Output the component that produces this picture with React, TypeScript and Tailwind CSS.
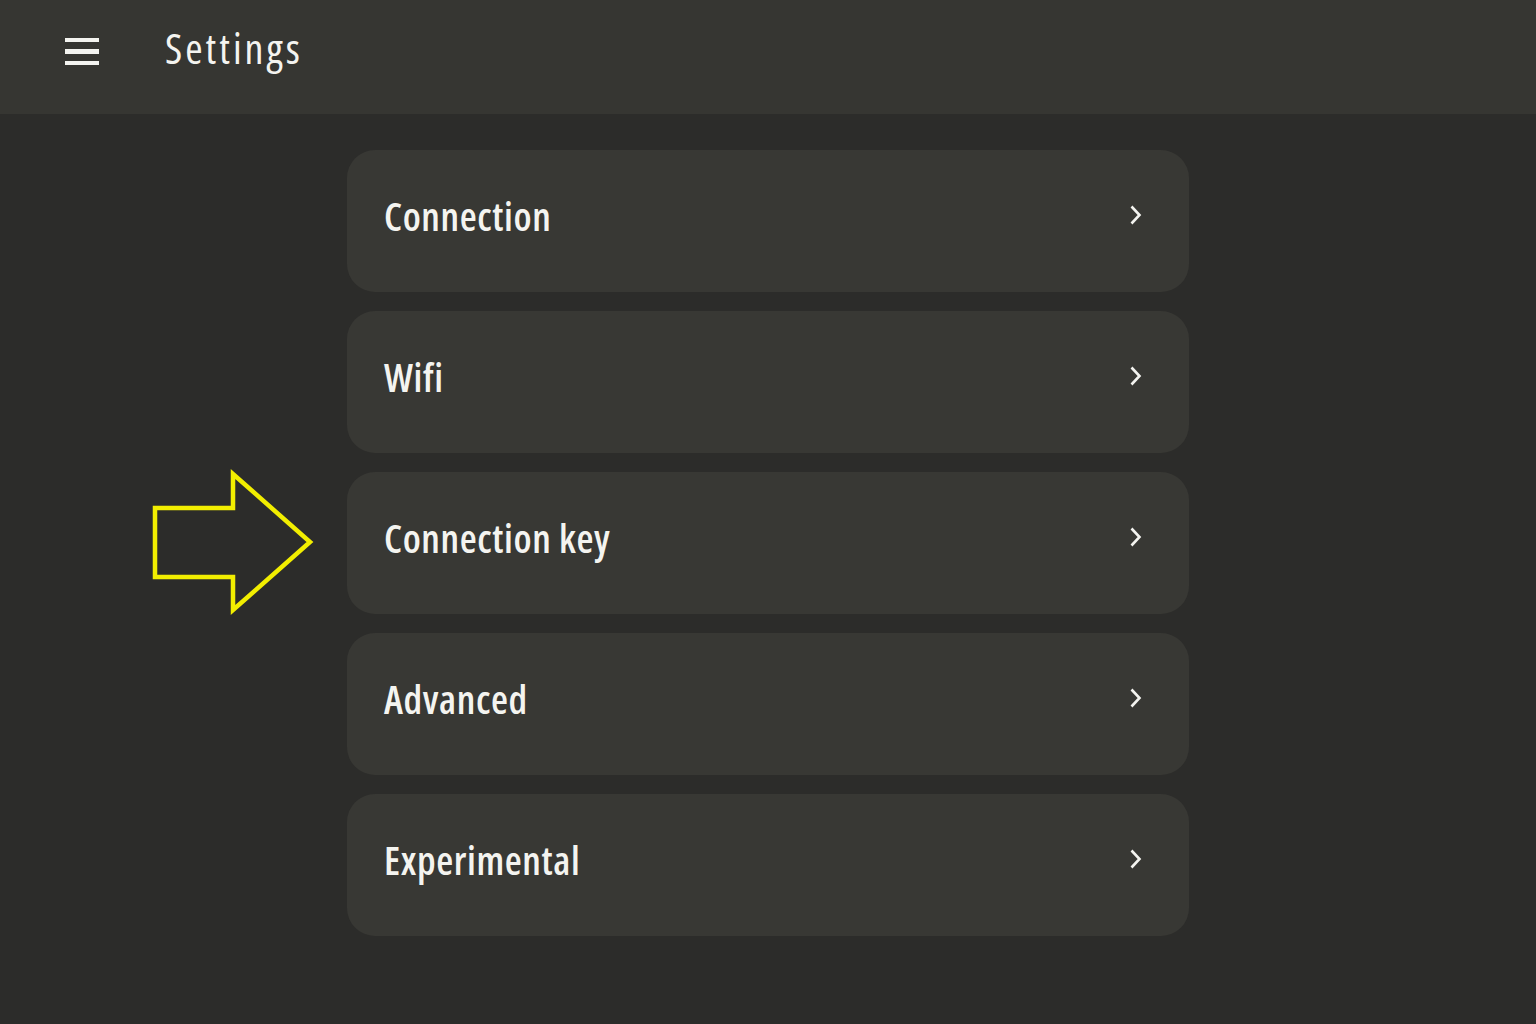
import React from "react";

const items = ["Connection", "Wifi", "Connection key", "Advanced", "Experimental"];

function Chevron() {
  return (
    <svg width="14" height="22" viewBox="0 0 14 22" fill="none" className="shrink-0">
      <path d="M2.5 2.5 L10.5 11 L2.5 19.5" stroke="#f4f4f0" strokeWidth="2.6" strokeLinecap="butt" strokeLinejoin="miter" />
    </svg>
  );
}

export default function App() {
  return (
    <div className="w-[1536px] h-[1024px] bg-[#2c2c2a] flex flex-col overflow-hidden font-['Open_Sans',sans-serif]">
      <header className="h-[114px] bg-[#363632] flex items-center shrink-0">
        <div className="ml-[65px] w-[34px] flex flex-col gap-[7px] -mt-[11px]">
          <div className="h-[4.5px] bg-[#f4f4f0]" />
          <div className="h-[4.5px] bg-[#f4f4f0]" />
          <div className="h-[4.5px] bg-[#f4f4f0]" />
        </div>
        <h1 className="ml-[66px] text-[42px] font-normal text-[#f4f4f0] leading-none [font-stretch:condensed] tracking-[3px] -mt-[18px]">
          Settings
        </h1>
      </header>
      <main className="flex">
        <div className="w-[347px] shrink-0 relative">
          <svg className="absolute left-[150px] top-[354px]" width="170" height="148" viewBox="150 468 170 148">
            <path
              d="M155 508 L233 508 L233 474 L310 542 L233 610 L233 577 L155 577 Z"
              fill="none"
              stroke="#f2ee00"
              strokeWidth="4.5"
              strokeLinejoin="miter"
            />
          </svg>
        </div>
        <div className="w-[842px] pt-[36px] flex flex-col gap-[19px]">
          {items.map((t) => (
            <div
              key={t}
              className="h-[142px] rounded-[28px] bg-[#383834] flex items-center justify-between pl-[37px] pr-[46px]"
            >
              <span className="text-[39px] font-semibold text-[#f4f4f0] leading-none [font-stretch:condensed] tracking-[0.6px] -mt-[12px]">
                {t}
              </span>
              <span className="-mt-[12px]">
                <Chevron />
              </span>
            </div>
          ))}
        </div>
      </main>
    </div>
  );
}
